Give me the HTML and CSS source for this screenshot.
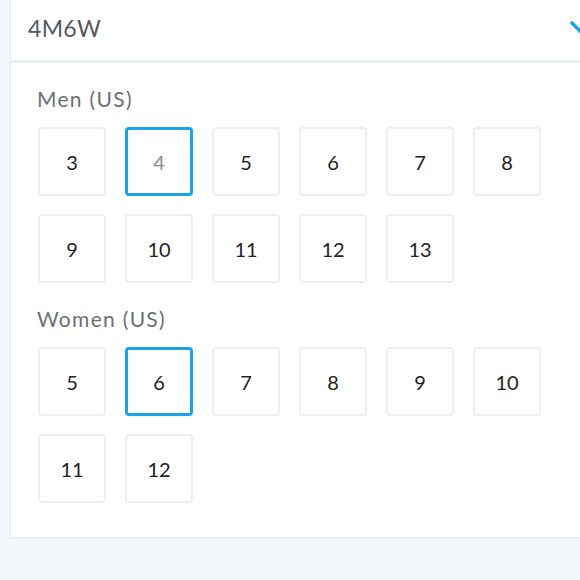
FILE: index.html
```html
<!DOCTYPE html>
<html>
<head>
<meta charset="utf-8">
<link rel="stylesheet" href="styles.css">
</head>
<body>
<div class="panel">
  <div class="header">
    <span class="value">4M6W</span>
    <svg class="chevron" width="24" height="16" viewBox="0 0 24 16"><path d="M3 3 L12 12 L21 3" fill="none" stroke="#1ca5e6" stroke-width="3.6" stroke-linecap="round" stroke-linejoin="round"/></svg>
  </div>
  <div class="content">
    <div class="label">Men (US)</div>
    <div class="grid">
      <div class="size">3</div>
      <div class="size selected muted">4</div>
      <div class="size">5</div>
      <div class="size">6</div>
      <div class="size">7</div>
      <div class="size">8</div>
      <div class="size">9</div>
      <div class="size">10</div>
      <div class="size">11</div>
      <div class="size">12</div>
      <div class="size">13</div>
    </div>
    <div class="label second">Women (US)</div>
    <div class="grid">
      <div class="size">5</div>
      <div class="size selected">6</div>
      <div class="size">7</div>
      <div class="size">8</div>
      <div class="size">9</div>
      <div class="size">10</div>
      <div class="size">11</div>
      <div class="size">12</div>
    </div>
  </div>
</div>
</body>
</html>
```

FILE: styles.css
```css
html, body {
  margin: 0;
  padding: 0;
  background: #f3f7fa;
  overflow: hidden;
  font-family: Lato, "Noto Sans", sans-serif;
}
.panel {
  margin-left: 10px;
  background: #fff;
  border-left: 1px solid #e6ecf0;
  border-bottom: 2px solid #e8eef2;
}
.header {
  height: 60px;
  display: flex;
  align-items: center;
  padding-left: 17px;
  border-bottom: 3px solid #e9eff3;
  overflow: hidden;
}
.value {
  font-size: 23px;
  color: #555a5e;
  letter-spacing: 0.3px;
  margin-top: -4px;
}
.chevron {
  margin-left: auto;
  margin-right: -13px;
  margin-top: -5px;
  flex-shrink: 0;
}
.content {
  padding: 25px 0 34px 27px;
}
.label {
  font-size: 21px;
  line-height: 22px;
  color: #6b7074;
  letter-spacing: 1.3px;
  margin-left: -1px;
  margin-bottom: 17px;
}
.label.second {
  margin-top: 25px;
}
.grid {
  display: grid;
  grid-template-columns: repeat(6, 68px);
  grid-auto-rows: 69px;
  column-gap: 19px;
  row-gap: 18px;
}
.size {
  box-sizing: border-box;
  border: 2px solid #edf0f3;
  border-radius: 4px;
  display: flex;
  align-items: center;
  justify-content: center;
  font-size: 20px;
  color: #1f2226;
}
.size.selected {
  border: 3px solid #1ca5e6;
}
.size.muted {
  color: #8a8d90;
}
```
